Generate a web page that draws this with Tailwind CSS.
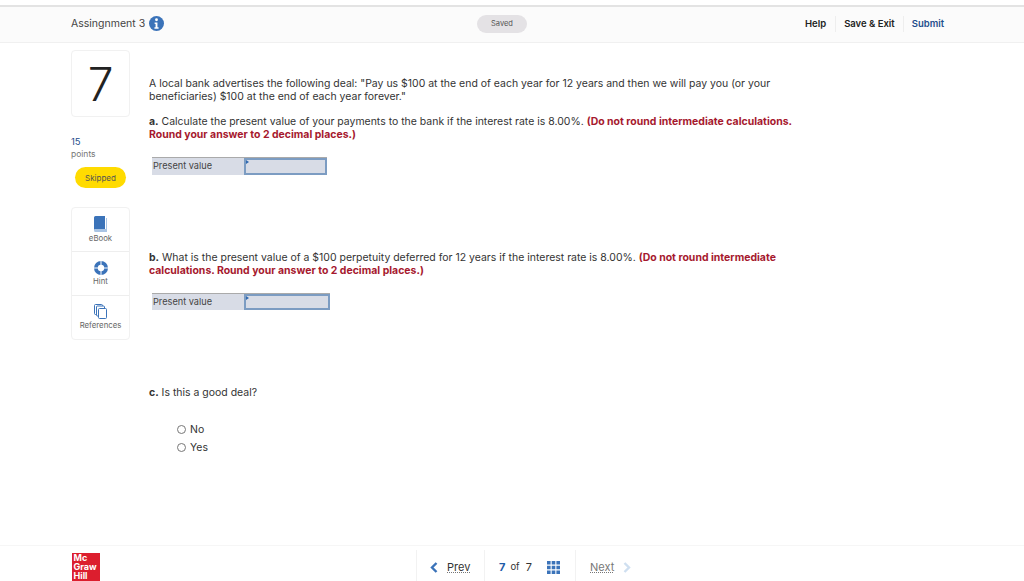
<!DOCTYPE html>
<html lang="en">
<head>
  <meta charset="UTF-8">
  <title>Assignment 3</title>
  <script src="https://cdn.jsdelivr.net/npm/@tailwindcss/browser@4"></script>
</head>
<body class="bg-white text-[#333] font-['Inter',sans-serif] h-[581px] w-[1024px] overflow-hidden flex flex-col">
  <!-- Header -->
  <header class="mt-[5px] h-[38px] shrink-0 bg-[#fbfbfb] border-t-2 border-t-[#e3e3e3] border-b border-b-[#f0f0f0] pl-[71px] pb-[2px] flex items-center">
    <div class="w-[330px] flex items-center gap-[4px]">
      <span class="text-[10.500px] text-[#444]">Assingnment 3</span>
      <svg width="15" height="15" viewBox="0 0 16 16"><circle cx="8" cy="8" r="8" fill="#3b73b9"/><circle cx="8" cy="4" r="1.500" fill="#fff"/><path d="M6 7h3v5h1.200v1.500H5.800V12H7V8.500H6z" fill="#fff"/></svg>
    </div>
    <div class="ml-[76px] w-[50px] h-[18px] rounded-full bg-[#e4e2e5] flex items-center justify-center text-[7.500px] text-[#555]">Saved</div>
    <nav class="ml-[278px] flex items-center text-[9.500px] font-semibold text-[#222]">
      <a class="pr-[9px] border-r border-[#eee] h-[16px] leading-[16px]">Help</a>
      <a class="pl-[8px] pr-[8px] border-r border-[#eee] h-[16px] leading-[16px]">Save &amp; Exit</a>
      <a class="pl-[8px] text-[#1f4e8c] h-[16px] leading-[16px]">Submit</a>
    </nav>
  </header>

  <main class="flex-1 flex pl-[71px]">
    <!-- Left column -->
    <aside class="w-[59px] shrink-0 mr-[19px] pt-[7px]">
      <div class="h-[67px] rounded-[4px] border border-[#f1f1f1] flex items-center justify-center text-[46px] font-light leading-none text-[#222]">7</div>
      <p class="mt-[19px] text-[9.500px] leading-[12px] text-[#1f4e8c]">15</p>
      <p class="text-[8.500px] leading-[12px] text-[#777]">points</p>
      <div class="ml-[4px] mt-[7px] w-[51px] h-[21px] rounded-full bg-[#ffdb00] flex items-center justify-center text-[8px] text-[#555]">Skipped</div>
      <div class="mt-[19px] rounded-[4px] border border-[#f1f1f1] flex flex-col text-[7.800px] text-[#666]">
        <div class="h-[44px] border-b border-[#eee] flex flex-col items-center pt-[8px]">
          <svg width="13" height="16" viewBox="0 0 13 16"><path d="M0 1.500A1.500 1.500 0 0 1 1.500 0H11v13H1.500A1.500 1.500 0 0 0 0 14.500z" fill="#3b73b9"/><path d="M12 2h1v14H1.500a1.500 1.500 0 0 1 0-3H12z" fill="#a9c4e4"/></svg>
          <span class="mt-[1px] leading-[10px]">eBook</span>
        </div>
        <div class="h-[44px] border-b border-[#eee] flex flex-col items-center pt-[9px]">
          <svg width="14" height="14" viewBox="0 0 14 14"><circle cx="7" cy="7" r="7" fill="#3b73b9"/><path d="M7 0v14M0 7h14" stroke="#fff" stroke-width="1"/><circle cx="7" cy="7" r="3.200" fill="#fff"/></svg>
          <span class="mt-[1px] leading-[10px]">Hint</span>
        </div>
        <div class="h-[43px] flex flex-col items-center pt-[8px]">
          <svg width="13" height="15" viewBox="0 0 13 15" fill="#fff" stroke="#3b73b9"><rect x=".5" y=".5" width="8" height="10" rx="1"/><rect x="2.500" y="2" width="8" height="10" rx="1"/><rect x="4.500" y="4.500" width="8" height="10" rx="1"/></svg>
          <span class="mt-[1px] leading-[10px] whitespace-nowrap">References</span>
        </div>
      </div>
    </aside>

    <!-- Questions -->
    <section class="w-[720px] pt-[34px] text-[10.470px] leading-[13px] text-[#333] whitespace-nowrap">
      <p>A local bank advertises the following deal: "Pay us $100 at the end of each year for 12 years and then we will pay you (or your<br>beneficiaries) $100 at the end of each year forever."</p>
      <p class="mt-[12px]"><b>a.</b> Calculate the present value of your payments to the bank if the interest rate is 8.00%. <b class="text-[#a6192e]">(Do not round intermediate calculations.<br>Round your answer to 2 decimal places.)</b></p>
      <div class="mt-[16px] ml-[3px] w-[175px] h-[18px] flex text-[9.200px] bg-[#d8dce6] border-t border-[#aaa]">
        <span class="w-[92px] pl-[1px] leading-[16px] text-[#444]">Present value</span>
        <div class="relative flex-1 border-2 border-[#7c9cc2]"><span class="absolute left-0 top-0 border-l-[3px] border-t-[2px] border-b-[2px] border-l-[#2f69b0] border-t-transparent border-b-transparent"></span></div>
      </div>
      <p class="mt-[76px]"><b>b.</b> What is the present value of a $100 perpetuity deferred for 12 years if the interest rate is 8.00%. <b class="text-[#a6192e]">(Do not round intermediate<br>calculations. Round your answer to 2 decimal places.)</b></p>
      <div class="mt-[16px] ml-[3px] w-[178px] h-[17px] flex text-[9.200px] bg-[#d8dce6] border-t border-[#aaa]">
        <span class="w-[92px] pl-[1px] leading-[15px] text-[#444]">Present value</span>
        <div class="relative flex-1 border-2 border-[#7c9cc2]"><span class="absolute left-0 top-0 border-l-[3px] border-t-[2px] border-b-[2px] border-l-[#2f69b0] border-t-transparent border-b-transparent"></span></div>
      </div>
      <p class="mt-[76px]"><b>c.</b> Is this a good deal?</p>
      <div class="mt-[23px] ml-[28px] flex flex-col gap-[4px]">
        <label class="flex items-center h-[14px] gap-[4px]"><span class="w-[9px] h-[9px] rounded-full border border-[#777]"></span>No</label>
        <label class="flex items-center h-[14px] gap-[4px]"><span class="w-[9px] h-[9px] rounded-full border border-[#777]"></span>Yes</label>
      </div>
    </section>
  </main>

  <!-- Footer -->
  <footer class="h-[36px] shrink-0 border-t border-[#f6f6f6] pl-[72px] flex items-end">
    <div class="w-[28px] h-[28px] bg-[#dc1e2e] text-white font-bold text-[9px] leading-[8.800px] pl-[1.500px] pt-[1px]">Mc<br>Graw<br>Hill</div>
    <div class="ml-[316px] flex h-[31px] items-center text-[11px]">
      <div class="h-full w-[69px] border-x border-[#f2f2f2] flex items-center pl-[13px] pt-[4px] gap-[9px]">
        <svg width="8" height="11" viewBox="0 0 8 11"><path d="M6.500 1L2 5.500 6.500 10" fill="none" stroke="#3b73b9" stroke-width="2.400"/></svg>
        <span class="underline decoration-dotted decoration-[#777]">Prev</span>
      </div>
      <div class="h-full w-[91px] border-r border-[#f2f2f2] flex items-center pl-[14px] pt-[4px]">
        <b class="text-[#1f5ca8]">7</b><span class="ml-[5px] text-[9.500px]">of</span><span class="ml-[6px]">7</span>
        <svg class="ml-[15px]" width="13" height="13" viewBox="0 0 13 13" fill="#3b73b9"><path d="M0 0h3.600v3.600H0zM4.700 0h3.600v3.600H4.700zM9.400 0H13v3.600H9.400zM0 4.700h3.600v3.600H0zM4.700 4.700h3.600v3.600H4.700zM9.400 4.700H13v3.600H9.400zM0 9.400h3.600V13H0zM4.700 9.400h3.600V13H4.700zM9.400 9.400H13V13H9.400z"/></svg>
      </div>
      <div class="flex items-center pl-[14px] pt-[4px] gap-[9px] text-[#777]">
        <span class="underline decoration-dotted">Next</span>
        <svg width="8" height="11" viewBox="0 0 8 11"><path d="M1.500 1L6 5.500 1.500 10" fill="none" stroke="#cfdff0" stroke-width="2.400"/></svg>
      </div>
    </div>
  </footer>
</body>
</html>
